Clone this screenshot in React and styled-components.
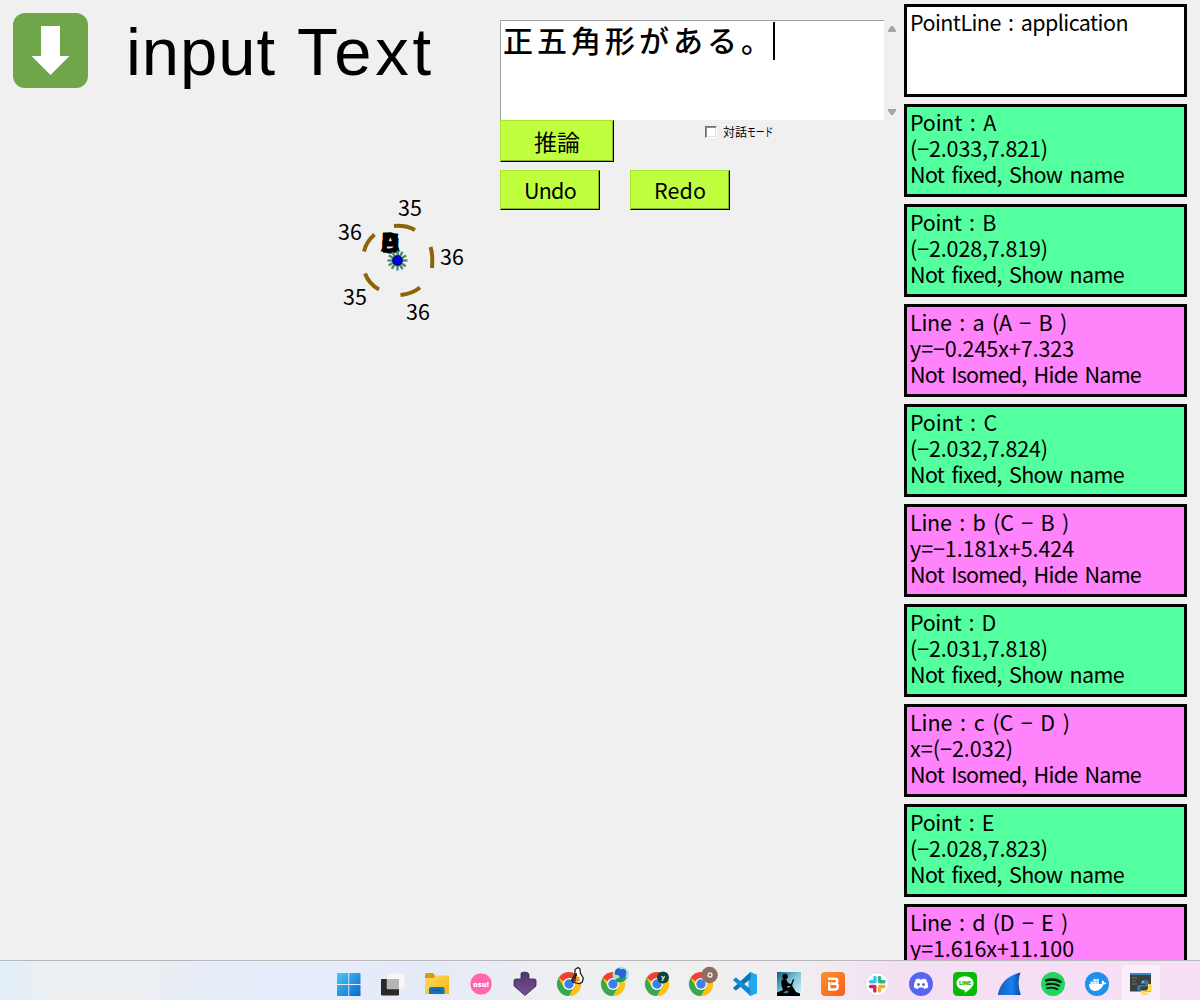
import React, { useLayoutEffect, useRef, useState } from "react";
import styled, { createGlobalStyle } from "styled-components";

const Global = createGlobalStyle`
  * { box-sizing: border-box; }
  body { margin: 0; overflow: hidden; background: #f0f0f0; color: #000;
    font-family: "Noto Sans CJK JP", "Noto Sans", sans-serif; }
`;

const Screen = styled.div`
  width: 1200px; height: 1000px; overflow: hidden;
  display: grid; grid-template-rows: 960px 40px;
`;
const Workspace = styled.main`
  display: grid; grid-template-columns: 500px 404px 296px; overflow: hidden;
`;
const Board = styled.section`
  display: flex; flex-direction: column;
`;
const Header = styled.header`
  display: flex; align-items: flex-start; gap: 38px; padding: 13px 0 0 13px; height: 180px;
`;
const ArrowButton = styled.button`
  width: 75px; height: 75px; padding: 0; border: 0; border-radius: 12px; background: #70a64a;
  svg { display: block; }
`;
const Title = styled.h1`
  margin: 0; display: flex; gap: 21px; font-family: "Liberation Sans", sans-serif;
  font-size: 67px; line-height: 77px; font-weight: 400; white-space: nowrap;
`;
const Figure = styled.svg`
  display: block; margin-left: 320px; overflow: visible;
`;
const Controls = styled.section`
  padding-top: 20px;
`;
const EditorRow = styled.div`
  display: flex; height: 100px;
`;
const Editor = styled.div`
  width: 384px; height: 100px; background: #fff; padding: 1px 0 0 2px;
  border-left: 1px solid #a0a0a0; border-top: 1px solid #a0a0a0;
  display: flex; align-items: flex-start;
`;
const Sentence = styled.span`
  font-weight: 500; font-size: 30px; letter-spacing: 4px; line-height: 35px; width: 270px; white-space: nowrap;
`;
const Caret = styled.i`
  width: 2px; height: 38px; background: #000;
`;
const Scrollbar = styled.div`
  width: 16px; padding: 6px 0 5px 4px; display: flex; flex-direction: column; justify-content: space-between;
`;
const ScrollArrow = styled.i`
  width: 8px; height: 6px; background: #a6a6a6;
  clip-path: ${(p) => (p.$up ? "polygon(38% 0, 62% 0, 100% 75%, 100% 100%, 0 100%, 0 75%)" : "polygon(0 0, 100% 0, 100% 25%, 62% 100%, 38% 100%, 0 25%)")};
`;
const RunRow = styled.div`
  display: flex; align-items: flex-start; gap: 91px; height: 50px;
`;
const HistoryRow = styled.div`
  display: flex; gap: 30px;
`;
const Button = styled.button`
  width: ${(p) => p.$w}px; height: ${(p) => p.$h}px; padding: 0; background: #c0ff3e;
  border: 1px solid; border-color: #a9e22f #000 #000 #a9e22f;
  box-shadow: inset -1px -1px 0 #86b32b;
  font: 400 ${(p) => p.$size || 21.5}px/1 "Noto Sans CJK JP", sans-serif; color: #000;
  display: flex; align-items: center; justify-content: center;
`;
const Mode = styled.label`
  display: flex; align-items: center; gap: 6px; padding-top: 4px; height: 20px;
  font-size: 12px; line-height: 16px; white-space: nowrap;
`;
const CheckBox = styled.span`
  width: 12px; height: 12px; background: #fff;
  border: 1px solid; border-color: #707070 #fff #fff #707070;
  box-shadow: inset 1px 1px 0 #8d8d8d, inset -1px -1px 0 #e3e3e3;
`;
const Narrow = styled.span`
  display: inline-block; transform: scaleX(0.73); transform-origin: left;
`;
const List = styled.aside`
  padding-top: 4px; display: flex; flex-direction: column; gap: 7px;
`;
const Card = styled.article`
  flex: none; width: 283px; height: 93px; border: 3px solid #000; padding: 2px 0 0 3px;
  background: ${(p) => ({ app: "#fff", point: "#54ff9f", line: "#ff83fa" })[p.$kind]};
`;
const CardLine = styled.div`
  height: 26px; line-height: 26px; font-size: 21.5px; white-space: pre; word-spacing: 3px;
`;

/* Spreads a string's letters over a given advance width. */
function Fitted({ width, children }) {
  const ref = useRef(null);
  const [spacing, setSpacing] = useState(0);
  useLayoutEffect(() => {
    const natural = ref.current.getBoundingClientRect().width;
    setSpacing((width - natural) / children.length);
  }, [width, children]);
  return <span ref={ref} style={{ letterSpacing: spacing }}>{children}</span>;
}

const notFixed = ["Not fixed, Show name", 214];
const notIsomed = ["Not Isomed, Hide Name", 231];
const cards = [
  ["app", ["PointLine : application", 218]],
  ["point", ["Point : A", 86], ["(−2.033,7.821)", 138], notFixed],
  ["point", ["Point : B", 86], ["(−2.028,7.819)", 138], notFixed],
  ["line", ["Line : a (A − B )", 157], ["y=−0.245x+7.323", 164], notIsomed],
  ["point", ["Point : C", 87], ["(−2.032,7.824)", 138], notFixed],
  ["line", ["Line : b (C − B )", 159], ["y=−1.181x+5.424", 164], notIsomed],
  ["point", ["Point : D", 86], ["(−2.031,7.818)", 138], notFixed],
  ["line", ["Line : c (C − D )", 160], ["x=(−2.032)", 103], notIsomed],
  ["point", ["Point : E", 84], ["(−2.028,7.823)", 138], notFixed],
  ["line", ["Line : d (D − E )", 158], ["y=1.616x+11.100", 164], notIsomed],
];

const arcs = [
  "M394 226 Q406 225 415 230",
  "M374.5 234.5 Q366 242 364 251.5",
  "M365 273.5 Q369 284 379 289.5",
  "M400.5 295 Q412 294 420 287.5",
  "M430.5 247 Q433 254 432 268",
];
const lengths = [[399, 216, "35"], [339, 240, "36"], [441, 265, "36"], [344, 305, "35"], [407, 320, "36"]];

function Diagram() {
  return (
    <Figure width="160" height="150" viewBox="320 180 160 150" fontFamily="Noto Sans CJK JP, sans-serif">
      {arcs.map((d) => <path key={d} d={d} fill="none" stroke="#8b6508" strokeWidth="4" />)}
      {lengths.map(([x, y, t]) => (
        <text key={x} x={x - 1} y={y} fontSize="21.5" textLength="24">{t}</text>
      ))}
      {["A", "B", "C", "D", "E"].map((t, i) => (
        <text key={t} x={381.5} y={250.5 + (i % 3)} fontFamily="Liberation Sans, sans-serif" fontSize="25" stroke="#000" strokeWidth="1.2" textLength="17.5" lengthAdjust="spacingAndGlyphs">{t}</text>
      ))}
      <g stroke="#458b74" strokeWidth="2.4">
        {[0, 35, 60, 90, 125, 152, 180, 210, 238, 272, 300, 330].map((a) => (
          <path key={a} d="M397.5 260.5h10" transform={`rotate(${a} 397.5 260.5)`} />
        ))}
      </g>
      <circle cx="397.5" cy="260.5" r="4.8" fill="#00f" stroke="#000" />
    </Figure>
  );
}

const Taskbar = styled.footer`
  display: flex; padding-left: 326px; border-top: 1px solid #b9b9bb;
  background: linear-gradient(90deg, #e1eefa 0, #ebeff2 45px, #eceff1 140px, #e6ecf8 210px, #e5ebf8 430px, #eceef1 540px, #f0f0f1 640px, #f0eef0 800px, #f3e1f3 890px, #f6def4 1000px, #f7e0f6 1200px);
`;
const Task = styled.div`
  width: 44px; height: 39px; display: flex; justify-content: center; padding: 11px 0 0 1px;
  svg { width: 24px; height: 24px; overflow: visible; }
`;
const ActiveTask = styled(Task)`
  width: 38px; height: 35px; margin: 4px 0 0 4px; padding: 7px 0 0 0;
  border-radius: 4px 4px 0 0; background: #fbeefa; box-shadow: 0 0 0 1px #f3e5f3;
`;

function Chrome({ children }) {
  return (
    <svg viewBox="0 0 24 24">
      <circle cx="12" cy="12" r="12" fill="#fbc116" />
      <path d="M12 12 1.6 6A12 12 0 0 1 22.4 6H12Z" fill="#ea4335" />
      <path d="M1.6 6A12 12 0 0 0 12 24l5.2-9L12 12 6.8 15Z" fill="#34a853" />
      <path d="M12 6H22.4A12 12 0 0 1 12 24l5.2-9Z" fill="#fbc116" />
      <circle cx="12" cy="12" r="6" fill="#fff" />
      <circle cx="12" cy="12" r="4.7" fill="#3c80eb" />
      {children}
    </svg>
  );
}

const icons = [
  <svg viewBox="0 0 24 24" key="win">
    <defs><linearGradient id="win" x1="0" y1="0" x2="1" y2="1"><stop stopColor="#48c9f9" /><stop offset="1" stopColor="#0768ca" /></linearGradient></defs>
    <path d="M0 1h11.3v11H0ZM12.2 1H23.5v11H12.2ZM0 13h11.3v11H0ZM12.2 13H23.5v11H12.2Z" fill="url(#win)" />
  </svg>,
  <svg viewBox="0 0 24 24" key="tasks">
    <rect y="7" width="18" height="16.5" rx="1" fill="#292929" />
    <rect x="6" y="1" width="18" height="16" rx="1" fill="#f7f7f7" stroke="#ddd" strokeWidth=".4" />
    <path d="M6 7h12v10H6Z" fill="#b5b5b5" />
  </svg>,
  <svg viewBox="0 0 24 24" key="files">
    <defs><linearGradient id="fold" x1="0" y1="0" x2="1" y2="1"><stop stopColor="#ffda68" /><stop offset="1" stopColor="#f8b50b" /></linearGradient></defs>
    <path d="M0 2.5Q0 1 1.5 1H8l2 2.5V7H0Z" fill="#d99b05" />
    <path d="M0 6h8.5l2.3-2.5H24V22H0Z" fill="url(#fold)" />
    <path d="M4 22v-5q0-2 2-2h11.5q2 0 2 2v5Z" fill="#1471bd" /><path d="M8 18.5h8" stroke="#08579b" />
  </svg>,
  <svg viewBox="0 0 24 24" key="osu">
    <circle cx="12" cy="12" r="11.2" fill="#ff66ab" stroke="#fff" strokeWidth=".8" />
    <text x="12" y="14.7" textAnchor="middle" fontFamily="Open Sans, sans-serif" fontWeight="800" fontSize="7.5" fill="#fff">osu!</text>
  </svg>,
  <svg viewBox="0 0 24 24" key="down">
    <defs><linearGradient id="pur" x1="0" y1="0" x2="0" y2="1"><stop stopColor="#51366f" /><stop offset="1" stopColor="#785095" /></linearGradient></defs>
    <path d="M8 2q0-2 2-1.5L12 0l3 1q1 .5 1 2v4h5.5q1.5 0 1.5 1.5V14L12 23.5 1 14V9Q1 7 3 7h5Z" fill="url(#pur)" stroke="#302442" strokeWidth=".8" />
  </svg>,
  <Chrome key="c1">
    <path d="M21-4.5 23-3l.3 4 3 5-1 4-2.8 1.5-6-1-2-2L18 2V-2.5Z" fill="#fff" stroke="#111" strokeWidth="1.2" />
    <path d="m18 2 2-1v5l-2 4-3-1 2-4Z" fill="#222" /><path d="m19 4 3 1 1 4-4 1Z" fill="#ed9c18" /><path d="m16 8 3-2v4Z" fill="#c5262c" />
  </Chrome>,
  <Chrome key="c2">
    <circle cx="20" cy="2.5" r="7.8" fill="#9cddec" stroke="#c3eaf0" />
    <path d="M15-2q3-3 5 0 4-2 5 2l-1 5-4 2-2-4-4-1Z" fill="#2b62d6" stroke="#24509a" strokeWidth=".7" />
    <path d="M14 8q4-4 7-1l5-2q-2 5-7 5.5-4 0-5-2.5Z" fill="#21a431" />
  </Chrome>,
  <Chrome key="c3">
    <circle cx="18" cy="5.5" r="6" fill="#00493f" />
    <text x="18" y="8" textAnchor="middle" fontFamily="Roboto, sans-serif" fontSize="8" fontWeight="700" fill="#d6e5e1">y</text>
  </Chrome>,
  <Chrome key="c4">
    <circle cx="20.5" cy="3" r="8.3" fill="#8d6e63" />
    <circle cx="21" cy="3" r="2" fill="none" stroke="#eee" strokeWidth="1.3" />
  </Chrome>,
  <svg viewBox="0 0 24 24" key="code">
    <path d="M17.5 0 24 2.7v18.6L17.5 24 15.5 22V2Z" fill="#25a7ed" />
    <path d="M17.5 0v7L3.3 18.2Q2.7 18.5 2 18L.5 16.8q-.7-.7 0-1.4Z" fill="#0877bd" />
    <path d="M17.5 24v-7L3.3 5.8Q2.7 5.5 2 6L.5 7.2q-.7.7 0 1.4Z" fill="#0e8ccf" />
  </svg>,
  <svg viewBox="0 0 24 24" key="reader">
    <defs><linearGradient id="read" x1="0" y1="0" x2="1" y2="1"><stop stopColor="#0b6080" /><stop offset=".45" stopColor="#79bed4" /><stop offset="1" stopColor="#d9f5fc" /></linearGradient></defs>
    <path d="M0 0h24v24H0Z" fill="url(#read)" />
    <circle cx="8" cy="4.5" r="2.8" />
    <path d="M5 7.5 9 7l2 4 3 1 2-5 1 .5-2 6.5-4.5 0 0 2 4.5-2.5 4 6.5 4 1.5V24H0V20.5l6-2.5Q3 12 5 7.5Z" />
    <path d="m6 20.5 4-2 2 1.5-3 1.5Z" fill="#42849b" />
  </svg>,
  <svg viewBox="0 0 24 24" key="b">
    <defs><linearGradient id="bb" x1="0" y1="0" x2="1" y2="1"><stop stopColor="#f5942a" /><stop offset="1" stopColor="#ff5b1b" /></linearGradient></defs>
    <rect width="24" height="24" rx="4" fill="url(#bb)" />
    <path d="M7 6.7H14q2.3 0 2.3 2.4T14 11.7h-4M8.2 10v7.5h6q2.6 0 2.6-2.9t-2.6-2.9" fill="none" stroke="#fff" strokeWidth="2.4" strokeLinejoin="round" />
  </svg>,
  <svg viewBox="0 0 24 24" key="slack">
    <circle cx="12" cy="12" r="11.5" fill="#fff" stroke="#d8d3d8" strokeWidth=".8" />
    <g fill="none" strokeWidth="3.4" strokeLinecap="round">
      <path d="M10 5.5v4M5.5 9.7H9" stroke="#36c5f0" /><path d="M14.5 5.5v4M15 9.7h4" stroke="#2eb67d" />
      <path d="M9.8 14.5v4.5M5.5 14.5H9" stroke="#e01e5a" /><path d="M14.5 15v4M15 14.5h4" stroke="#ecb22e" />
    </g>
  </svg>,
  <svg viewBox="0 0 24 24" key="discord">
    <circle cx="12" cy="12" r="12" fill="#5865f2" />
    <path d="M7 7.3 10 6.5l.7 1h2.6l.7-1 3 .8q2.3 3.6 2.2 8-2 1.7-4 1.7l-1-1.5H9.8L8.8 17q-2 0-4-1.7Q4.7 11 7 7.3Z" fill="#fff" />
    <ellipse cx="9.5" cy="12.5" rx="1.4" ry="1.6" fill="#5865f2" /><ellipse cx="14.5" cy="12.5" rx="1.4" ry="1.6" fill="#5865f2" />
  </svg>,
  <svg viewBox="0 0 24 24" key="line">
    <rect width="24" height="24" rx="4.5" fill="#06bb06" />
    <path d="M12 4.2c5 0 8.5 3 8.5 6.8 0 4-4.5 6.8-8 9.5-1 .7-.5-1.5-1-2.5-5-.4-8-3.3-8-7C3.5 7.2 7 4.2 12 4.2Z" fill="#fff" />
    <text x="12" y="13.2" textAnchor="middle" fontFamily="Roboto, sans-serif" fontWeight="900" fontSize="5.8" fill="#06bb06">LINE</text>
  </svg>,
  <svg viewBox="0 0 24 24" key="shark">
    <defs><linearGradient id="shk" x1="0" y1="0" x2="1" y2="0"><stop stopColor="#1b5bbb" /><stop offset=".6" stopColor="#1680f0" /><stop offset="1" stopColor="#0d49a0" /></linearGradient></defs>
    <path d="M.7 23Q4 5 23.5.5q-4 10 .3 22.5Z" fill="url(#shk)" />
  </svg>,
  <svg viewBox="0 0 24 24" key="spotify">
    <circle cx="12" cy="12" r="12" fill="#1ed760" />
    <g fill="none" stroke="#111" strokeLinecap="round"><path d="M5 8.5q8-2.5 14.5 1.3" strokeWidth="2.5" /><path d="M5.5 12.5q7-2 12.5 1.2" strokeWidth="2" /><path d="M6 16.2q6-1.5 10.5 1.1" strokeWidth="1.7" /></g>
  </svg>,
  <svg viewBox="0 0 24 24" key="docker">
    <circle cx="12" cy="12" r="12" fill="#1d91ed" />
    <path d="M4 12h12.5q.8-1 .2-2.5l1-1.2q1.3 1 1.5 2.3 1.5-.3 2.3.3-.8 1.7-3 1.7-2.5 6.4-8.5 6.4-6 0-6-7Z" fill="#fff" />
    <path d="M5.5 9.5H8V12H5.5ZM8.4 9.5h2.5V12H8.4ZM11.3 9.5h2.5V12h-2.5ZM8.4 6.9h2.5v2.3H8.4ZM11.3 6.9h2.5v2.3h-2.5Z" fill="#e7f4ff" />
  </svg>,
];

const PythonIcon = () => (
  <svg viewBox="0 0 24 24">
    <path d="M1 1h21v18.5H1Z" fill="#3b4040" /><path d="M1 1h21v2H1Z" fill="#3288c8" />
    <path d="M3 6h5M3 9h4M3 12h5" stroke="#5a7e5d" />
    <path d="M16 8q-4 0-4 2.5V12h4.5v1H10q-2 0-2 3t2 3h1.5v-2.5q0-2 2-2H18q2 0 2-2v-2Q20 8 16 8Z" fill="#3875aa" />
    <path d="M16 23q-4 0-4-2.5V18.5h4q3 0 3-3V12h1.5q2.5 0 2.5 4 0 3.5-2.5 3.5H16v1h4q0 2.5-4 2.5Z" fill="#ffda4c" />
    <circle cx="14" cy="9.8" r=".8" fill="#fff" /><circle cx="18" cy="21.3" r=".7" fill="#fff" />
  </svg>
);

export default function App() {
  return (
    <>
      <Global />
      <Screen>
        <Workspace>
          <Board>
            <Header>
              <ArrowButton aria-label="Down">
                <svg width="75" height="75" viewBox="13 13 75 75"><path d="M41 26h19v30h9.5L50.5 75 31.5 56H41Z" fill="#fff" /></svg>
              </ArrowButton>
              <Title><Fitted width={150}>input</Fitted><Fitted width={138}>Text</Fitted></Title>
            </Header>
            <Diagram />
          </Board>
          <Controls>
            <EditorRow>
              <Editor><Sentence>正五角形がある。</Sentence><Caret /></Editor>
              <Scrollbar><ScrollArrow $up /><ScrollArrow /></Scrollbar>
            </EditorRow>
            <RunRow>
              <Button $w={114} $h={42} $size={23}>推論</Button>
              <Mode><CheckBox /><span>対話<Narrow>モード</Narrow></span></Mode>
            </RunRow>
            <HistoryRow>
              <Button $w={100} $h={40}><Fitted width={52}>Undo</Fitted></Button>
              <Button $w={100} $h={40}><Fitted width={52}>Redo</Fitted></Button>
            </HistoryRow>
          </Controls>
          <List>
            {cards.map(([kind, ...lines], i) => (
              <Card key={i} $kind={kind}>
                {lines.map(([text, width]) => (
                  <CardLine key={text}><Fitted width={width}>{text}</Fitted></CardLine>
                ))}
              </Card>
            ))}
          </List>
        </Workspace>
        <Taskbar>
          {icons.map((icon) => <Task key={icon.key}>{icon}</Task>)}
          <ActiveTask><PythonIcon /></ActiveTask>
        </Taskbar>
      </Screen>
    </>
  );
}
